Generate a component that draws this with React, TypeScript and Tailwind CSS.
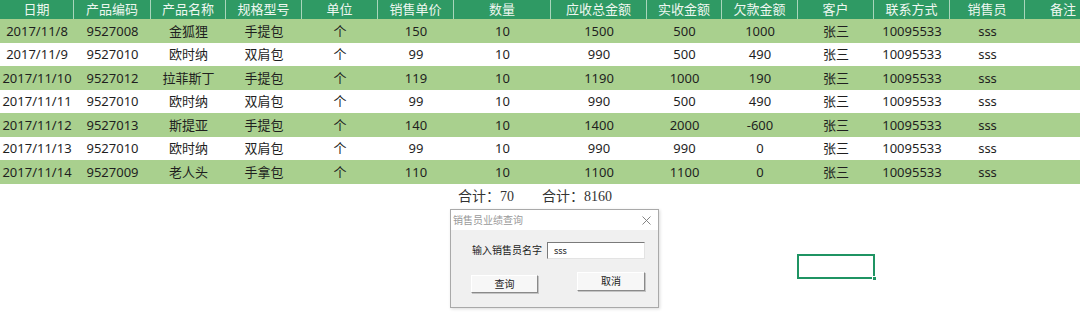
import React from 'react';

const headers = [
  '日期', '产品编码', '产品名称', '规格型号', '单位', '销售单价', '数量',
  '应收总金额', '实收金额', '欠款金额', '客户', '联系方式', '销售员', '备注',
];

const rows = [
  ['2017/11/8', '9527008', '金狐狸', '手提包', '个', '150', '10', '1500', '500', '1000'],
  ['2017/11/9', '9527010', '欧时纳', '双肩包', '个', '99', '10', '990', '500', '490'],
  ['2017/11/10', '9527012', '拉菲斯丁', '手提包', '个', '119', '10', '1190', '1000', '190'],
  ['2017/11/11', '9527010', '欧时纳', '双肩包', '个', '99', '10', '990', '500', '490'],
  ['2017/11/12', '9527013', '斯提亚', '手提包', '个', '140', '10', '1400', '2000', '-600'],
  ['2017/11/13', '9527010', '欧时纳', '双肩包', '个', '99', '10', '990', '990', '0'],
  ['2017/11/14', '9527009', '老人头', '手拿包', '个', '110', '10', '1100', '1100', '0'],
];

const cols =
  'grid grid-cols-[74px_77px_75px_76px_76px_76px_97px_96px_75px_76px_76px_76px_75px_76px] w-[1101px]';

const App: React.FC = () => {
  return (
    <div className="relative w-[1080px] h-[318px] overflow-hidden bg-white font-['Noto_Sans','Noto_Sans_CJK_SC',sans-serif]">
      {/* sheet */}
      <div className={`${cols} h-[19px] bg-[#2f9a64] text-[13px] leading-[19px] text-[#eef7f0]`}>
        {headers.map((h, i) => (
          <div key={h} className={`text-center ${i < headers.length - 1 ? 'border-r border-[#a9d6bb]' : ''}`}>
            {h}
          </div>
        ))}
      </div>
      {rows.map((r, i) => (
        <div
          key={i}
          className={`${cols} text-[13px] text-[#1f1f1f] ${i % 2 === 0 ? 'h-[24px] leading-[24px] bg-[#a9d08e]' : 'h-[23px] leading-[23px] bg-white'}`}
        >
          {[...r, '张三', '10095533', 'sss', ''].map((c, j) => (
            <div key={j} className="text-center whitespace-nowrap">
              {c}
            </div>
          ))}
        </div>
      ))}

      {/* totals */}
      <div className="flex h-[25px] items-center pl-[458px] font-['Liberation_Serif','Noto_Sans_CJK_SC',serif] text-[14px] text-[#333]">
        <span>合计：70</span>
        <span className="ml-[28px]">合计：8160</span>
      </div>

      {/* dialog */}
      <div className="ml-[450px] flex h-[99px] w-[209px] flex-col border border-[#a9a9a9] bg-[#f0f0f0] shadow-[1px_1px_3px_rgba(0,0,0,0.15)]">
        <div className="flex h-[20px] items-center justify-between bg-white pl-[2px] pr-[7px] text-[10px] text-[#9a9a9a]">
          <span>销售员业绩查询</span>
          <svg width="9" height="9" viewBox="0 0 9 9" fill="none" stroke="#777" strokeWidth="0.9">
            <path d="M0.5 0.5 L8.5 8.5 M8.5 0.5 L0.5 8.5" />
          </svg>
        </div>
        <div className="flex items-center pl-[21px] pt-[12px]">
          <span className="w-[75px] text-[10px] text-[#222]">输入销售员名字</span>
          <div className="flex h-[17px] w-[98px] items-center border-t border-l border-t-[#7a7a7a] border-l-[#7a7a7a] border-b border-r border-b-[#e3e3e3] border-r-[#e3e3e3] bg-white pl-[6px] text-[9px] leading-none text-[#222]">
            sss
          </div>
        </div>
        <div className="flex items-start pl-[20px] pt-[13px]">
          <div className="mt-[3px] flex h-[18px] w-[67px] items-center justify-center border border-t-white border-l-white border-b-[#8a8a8a] border-r-[#8a8a8a] bg-[#f7f7f7] text-[10px] text-[#222] shadow-[1px_1px_0_#c4c4c4]">
            查询
          </div>
          <div className="ml-[39px] flex h-[19px] w-[68px] items-center justify-center border border-t-white border-l-white border-b-[#8a8a8a] border-r-[#8a8a8a] bg-[#f7f7f7] text-[10px] text-[#222] shadow-[1px_1px_0_#c4c4c4]">
            取消
          </div>
        </div>
      </div>

      {/* active cell */}
      <div className="absolute left-[797px] top-[254px] h-[25px] w-[78px] border-2 border-[#1f9463]" />
      <div className="absolute left-[872px] top-[276px] h-[5px] w-[5px] border border-white bg-[#1f9463]" />
    </div>
  );
};

export default App;
